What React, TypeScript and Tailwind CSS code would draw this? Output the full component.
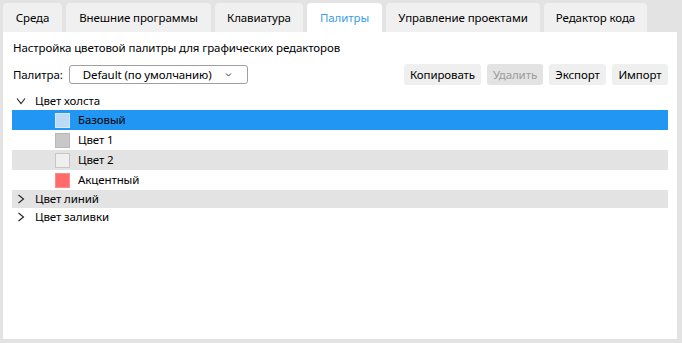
import React from "react";

const tabs = [
  { label: "Среда", w: "w-[59px]" },
  { label: "Внешние программы", w: "w-[145px]" },
  { label: "Клавиатура", w: "w-[88px]" },
  { label: "Палитры", w: "w-[75px]", active: true },
  { label: "Управление проектами", w: "w-[154px]" },
  { label: "Редактор кода", w: "w-[103px]" },
];

function ChevronDown() {
  return (
    <svg width="10" height="10" viewBox="0 0 10 10">
      <polyline points="1,2.5 5,7.5 9,2.5" fill="none" stroke="#222" strokeWidth="1.1" />
    </svg>
  );
}

function SmallChevron() {
  return (
    <svg width="7" height="6" viewBox="0 0 7 6">
      <polyline points="1,1.5 3.5,4 6,1.5" fill="none" stroke="#333" strokeWidth="1" />
    </svg>
  );
}

function ChevronRight() {
  return (
    <svg width="10" height="10" viewBox="0 0 10 10">
      <polyline points="2.5,1 7.5,5 2.5,9" fill="none" stroke="#222" strokeWidth="1.1" />
    </svg>
  );
}

const children = [
  { label: "Базовый", color: "bg-[#bcdaf7]", border: "border-[#d6e8fa]", bg: "bg-[#2196f3]" },
  { label: "Цвет 1", color: "bg-[#c8c8c8]", border: "border-[#b8b8b8]", bg: "bg-white" },
  { label: "Цвет 2", color: "bg-[#efefef]", border: "border-[#c6c6c6]", bg: "bg-[#e3e3e3]" },
  { label: "Акцентный", color: "bg-[#ff6b6b]", border: "border-[#ff8a8a]", bg: "bg-white" },
];

export default function App() {
  return (
    <div
      className="w-[682px] h-[343px] bg-[#e3e3e3] pl-[3px] pt-[3px] pr-[5px] pb-[4px] flex flex-col text-[11.5px] tracking-[-0.1px] text-black"
      style={{ fontFamily: '"Noto Sans", "Open Sans", sans-serif' }}
    >
      <div className="flex gap-[4px] h-[29px]">
        {tabs.map((t) => (
          <div
            key={t.label}
            className={`${t.w} h-full flex items-center justify-center rounded-t-[4px] ${
              t.active ? "bg-white text-[#3a9cf2]" : "bg-[#f0f0f0]"
            }`}
          >
            {t.label}
          </div>
        ))}
      </div>
      <div className="flex-1 bg-white pt-[8px] pl-[9px] pr-[9px] flex flex-col">
        <div className="h-[16px] leading-[16px] pl-[1px]">Настройка цветовой палитры для графических редакторов</div>
        <div className="mt-[8px] h-[21px] flex items-center">
          <span className="pl-[1px]">Палитра:</span>
          <div className="ml-[6px] w-[179px] h-[19px] border border-[#a0a0a0] rounded-[3px] flex items-center pl-[13px] pr-[15px]">
            <span className="flex-1">Default (по умолчанию)</span>
            <SmallChevron />
          </div>
          <div className="flex-1" />
          <div className="flex gap-[6px]">
            <div className="w-[77px] h-[21px] bg-[#efefef] rounded-[3px] flex items-center justify-center">Копировать</div>
            <div className="w-[56px] h-[21px] bg-[#e3e3e3] text-[#9a9a9a] rounded-[3px] flex items-center justify-center">Удалить</div>
            <div className="w-[57px] h-[21px] bg-[#efefef] rounded-[3px] flex items-center justify-center">Экспорт</div>
            <div className="w-[56px] h-[21px] bg-[#efefef] rounded-[3px] flex items-center justify-center">Импорт</div>
          </div>
        </div>
        <div className="mt-[7px] flex flex-col">
          <div className="h-[18px] flex items-center">
            <div className="w-[23px] pl-[4px] flex items-center"><ChevronDown /></div>
            <span>Цвет холста</span>
          </div>
          {children.map((c) => (
            <div key={c.label} className={`h-[20px] flex items-center ${c.bg}`}>
              <div className={`ml-[43px] w-[15px] h-[15px] border ${c.border} ${c.color}`} />
              <span className="ml-[8px]">{c.label}</span>
            </div>
          ))}
          <div className="h-[18px] flex items-center bg-[#e3e3e3]">
            <div className="w-[23px] pl-[4px] flex items-center"><ChevronRight /></div>
            <span>Цвет линий</span>
          </div>
          <div className="h-[18px] flex items-center">
            <div className="w-[23px] pl-[4px] flex items-center"><ChevronRight /></div>
            <span>Цвет заливки</span>
          </div>
        </div>
      </div>
    </div>
  );
}
